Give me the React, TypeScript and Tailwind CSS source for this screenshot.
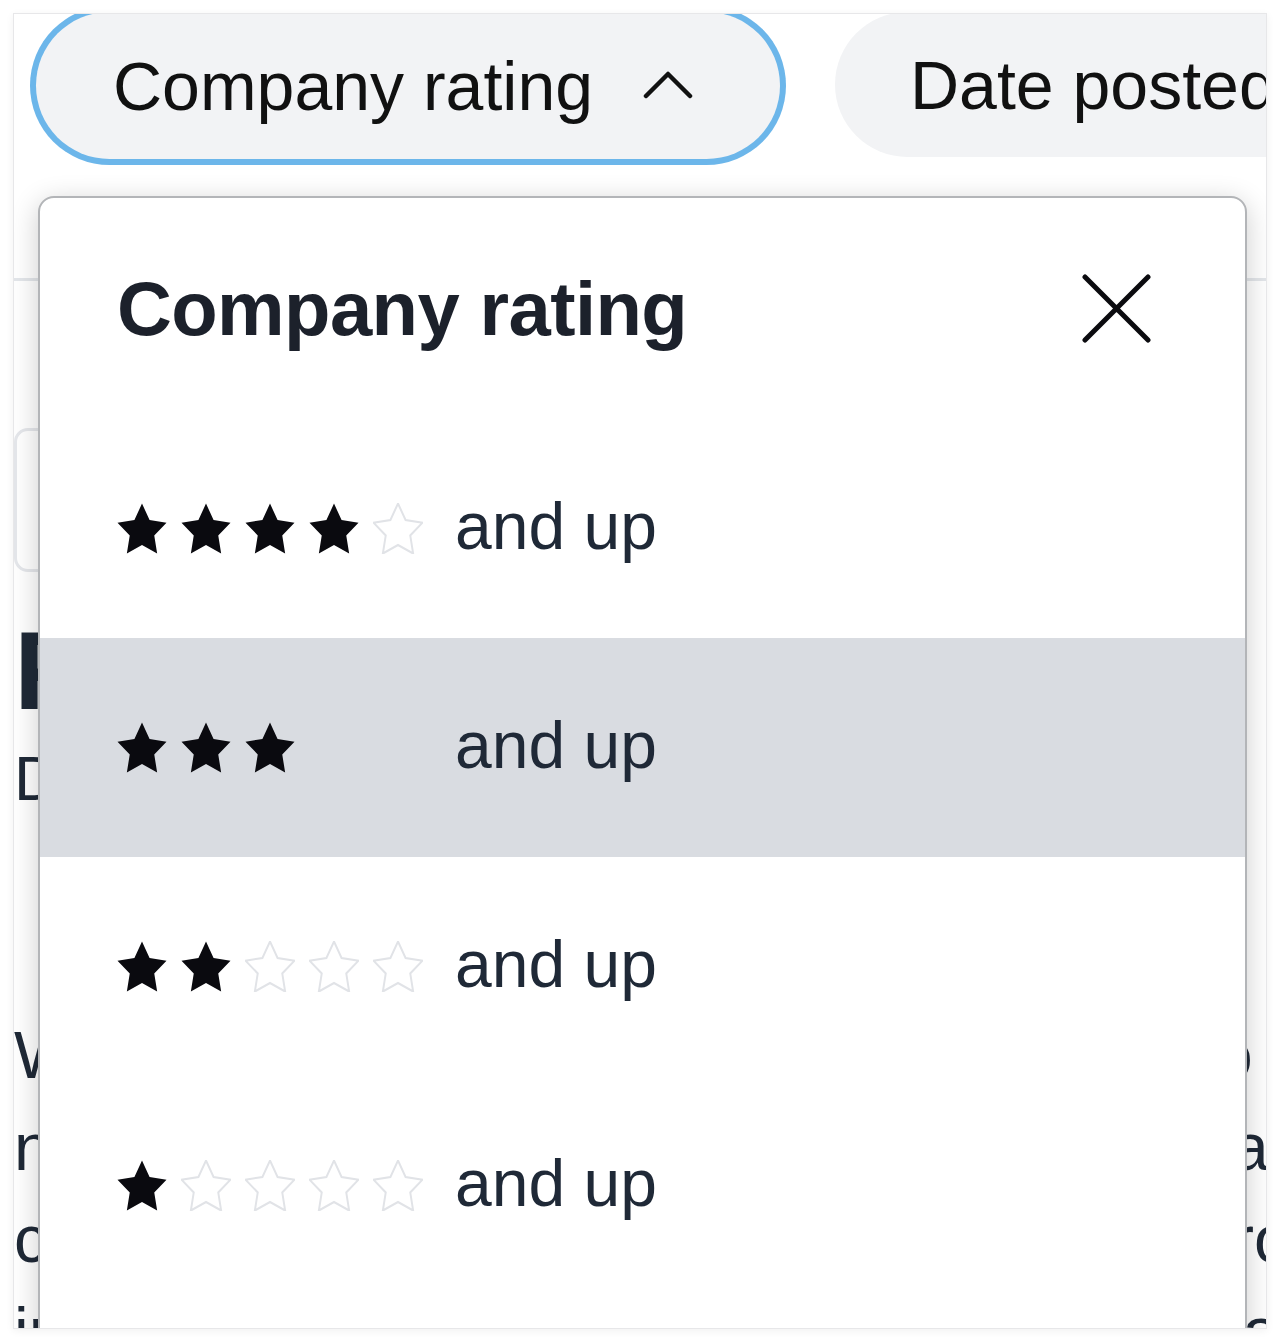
import React from 'react';

const ratings = [4, 3, 2, 1];

const Star = ({ filled, hide }: { filled: boolean; hide?: boolean }) => (
  <svg width="50" height="51" viewBox="1.8 1.8 20.4 19.4" preserveAspectRatio="none">
    <polygon
      points="12,2 15.09,8.26 22,9.27 17,14.14 18.18,21.02 12,17.77 5.82,21.02 7,14.14 2,9.27 8.91,8.26"
      fill={filled ? '#0a0a0f' : 'none'}
      stroke={filled ? 'none' : hide ? 'transparent' : '#e1e3e7'}
      strokeWidth={0.8}
    />
  </svg>
);

const ChevronUp = () => (
  <svg width="50" height="32" viewBox="0 0 50 32" fill="none">
    <polyline points="3,28 25,6 47,28" stroke="#111" strokeWidth="4.5" strokeLinecap="round" strokeLinejoin="round" />
  </svg>
);

const CloseIcon = () => (
  <svg width="69" height="69" viewBox="0 0 69 69" fill="none">
    <path d="M3 3L66 66M66 3L3 66" stroke="#0b0b0f" strokeWidth="5" strokeLinecap="round" />
  </svg>
);

const App = () => {
  const selected = 3;

  return (
    <div className="h-[1342px] w-[1280px] bg-white pl-[13px] pt-[13px] font-['Liberation_Sans',Arial,sans-serif]">
      <div className="relative h-[1316px] w-[1254px] overflow-hidden border border-[#e7e7e9] bg-white shadow-[0_2px_8px_rgba(0,0,0,0.06)]">
        {/* filter pills */}
        <div className="-mt-[2px] flex items-start gap-[55px] whitespace-nowrap pl-[22px]">
          <button className="flex h-[147px] w-[744px] shrink-0 items-center rounded-full bg-[#f2f3f5] pl-[77px] ring-[6px] ring-[#6cb6ea]">
            <span className="text-[68px] leading-none text-[#111]">Company rating</span>
            <span className="ml-[50px] -mt-[4px]">
              <ChevronUp />
            </span>
          </button>
          <button className="flex h-[145px] w-[600px] shrink-0 items-center rounded-full bg-[#f2f3f5] pl-[75px]">
            <span className="text-[68px] leading-none text-[#111]">Date posted</span>
          </button>
        </div>

        {/* page content behind the popover */}
        <div className="mt-[119px] h-[3px] w-full bg-[#e3e6ea]" />
        <div className="mt-[147px] h-[144px] w-[1200px] rounded-[14px] border-[3px] border-[#e5e7eb]" />
        <div className="mt-[43px] whitespace-nowrap text-[#1f2937]">
          <div className="text-[112px] font-bold leading-[112px]">Frontend Developer</div>
          <div className="mt-[20px] text-[63px] leading-[63px]">Dataflow Systems · Remote</div>
          <div className="mt-[199px] text-[66px] leading-[92px]">
            <div>We are looking for a skilled developer who will help us</div>
            <div>new features and maintain our web applications for the</div>
            <div>collaborating closely with designers and product teams to</div>
            <div>improve performance, accessibility and usability across the</div>
          </div>
        </div>

        {/* rating popover */}
        <div className="absolute left-[24px] top-[182px] w-[1209px] overflow-hidden rounded-[16px] border-2 border-[#b3b5b8] bg-white shadow-[0_6px_28px_rgba(0,0,0,0.2)]">
          <div className="flex h-[221px] items-center justify-between pl-[77px] pr-[94px]">
            <h2 className="text-[76px] font-bold leading-none tracking-[-0.6px] text-[#1c212b]">Company rating</h2>
            <button aria-label="Close">
              <CloseIcon />
            </button>
          </div>
          <ul>
            {ratings.map((r) => (
              <li
                key={r}
                className={`flex h-[219px] items-center pl-[77px] ${r === selected ? 'bg-[#d9dce1]' : 'bg-white'}`}
              >
                <div className="flex gap-[14px]">
                  {[1, 2, 3, 4, 5].map((i) => (
                    <Star key={i} filled={i <= r} hide={r === selected} />
                  ))}
                </div>
                <span className="ml-[32px] -mt-[6px] text-[66px] leading-none text-[#1f2937]">and up</span>
              </li>
            ))}
            <li className="h-[219px]" />
          </ul>
        </div>
      </div>
    </div>
  );
};

export default App;
